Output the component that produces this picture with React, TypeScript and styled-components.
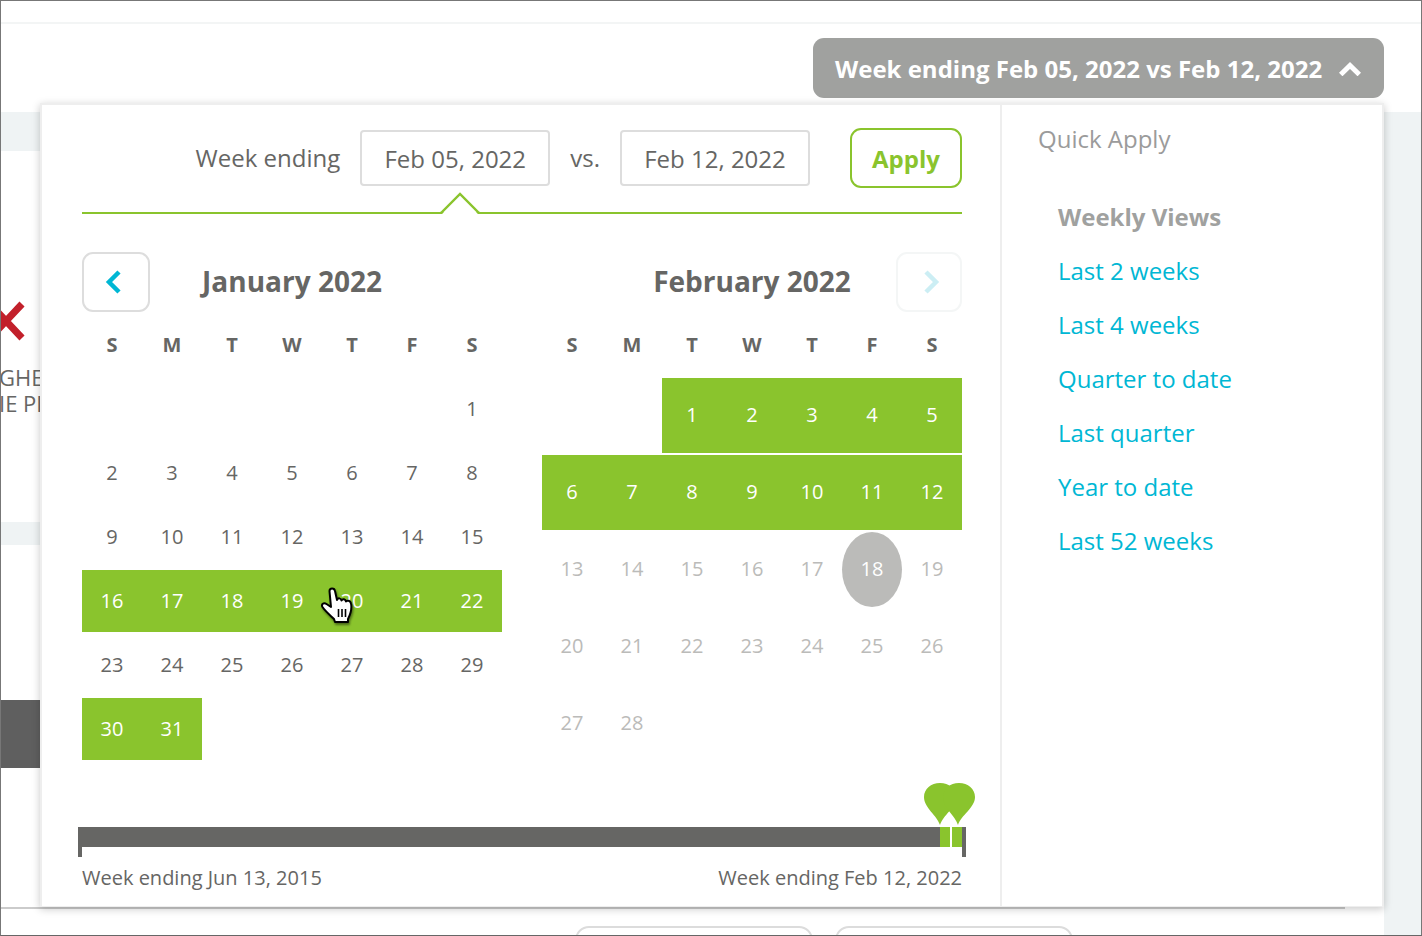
import React from "react";
import styled, { createGlobalStyle } from "styled-components";

const GREEN = "#8ac42d";
const TEXT = "#666664";
const CYAN = "#00b7d4";

const GlobalStyle = createGlobalStyle`
  html, body {
    margin: 0;
    padding: 0;
    background: #fff;
  }
  body {
    font-family: "Open Sans", "Liberation Sans", sans-serif;
    color: ${TEXT};
  }
`;

const Frame = styled.div`
  position: relative;
  width: 1422px;
  height: 936px;
  box-sizing: border-box;
  border: 1px solid #777;
  border-bottom-color: #666;
  overflow: hidden;
  background: #fff;
`;

const TopStrip = styled.div`
  height: 21px;
  border-bottom: 2px solid #f3f5f5;
`;

const PageHeader = styled.header`
  display: flex;
  justify-content: flex-end;
  padding: 14px 37px 14px 0;
`;

const RangeButton = styled.button`
  display: flex;
  align-items: center;
  gap: 17px;
  width: 571px;
  height: 60px;
  box-sizing: border-box;
  padding: 0 22px;
  border: 0;
  border-radius: 11px;
  background: #a0a19f;
  color: #fff;
  font-family: inherit;
  font-size: 24px;
  font-weight: 700;
  white-space: nowrap;
`;

const RangeChevron = styled.svg`
  flex: none;
  width: 22px;
  height: 14px;
  margin-top: 2px;
`;

const PageBody = styled.div`
  display: flex;
  height: 823px;
`;

const Main = styled.main`
  flex: 1;
  min-width: 0;
  display: flex;
  flex-direction: column;
`;

const Gutter = styled.div`
  width: 37px;
  background: #eff3f4;
`;

const Band = styled.div<{ $height: number }>`
  height: ${(p) => p.$height}px;
  flex: none;
  background: #eff3f4;
`;

const DarkBand = styled.div`
  height: 68px;
  flex: none;
  background: #5f5f5f;
`;

const Blank = styled.div<{ $height: number }>`
  height: ${(p) => p.$height}px;
  flex: none;
`;

const RuleLine = styled.div`
  height: 2px;
  flex: none;
  width: 1344px;
  background: #cbcbcb;
`;

const HiddenCard = styled.section`
  height: 371px;
  flex: none;
  box-sizing: border-box;
  padding-top: 150px;
  margin-left: -2px;
  font-size: 22px;
  line-height: 26px;
  white-space: nowrap;
`;

const CrossMark = styled.svg`
  display: block;
  width: 40px;
  height: 40px;
  margin: 0 0 23px -13px;
`;

const FooterPills = styled.div`
  display: flex;
  gap: 22px;
  padding: 17px 0 0 574px;
`;

const Pill = styled.div`
  width: 238px;
  height: 40px;
  box-sizing: border-box;
  border: 2px solid #dcdcdc;
  border-radius: 14px;
`;

const Popup = styled.div`
  position: absolute;
  left: 39px;
  top: 102px;
  width: 1344px;
  height: 804px;
  box-sizing: border-box;
  display: flex;
  border: 2px solid #eeeeee;
  border-bottom-width: 1px;
  background: #fff;
  box-shadow: 0 2px 8px rgba(0, 0, 0, 0.22);
`;

const PickerPane = styled.div`
  width: 960px;
  flex: none;
  box-sizing: border-box;
  padding: 23px 38px 0 40px;
  border-right: 2px solid #eeeeee;
`;

const DateRow = styled.div`
  position: relative;
  display: flex;
  align-items: center;
  justify-content: flex-end;
  padding-bottom: 24px;
  border-bottom: 2px solid ${GREEN};
  font-size: 24px;
`;

const DateLabel = styled.span<{ $gap: number }>`
  margin-right: ${(p) => p.$gap}px;
  margin-bottom: 2px;
`;

const DateBox = styled.div<{ $gap: number }>`
  width: 190px;
  height: 56px;
  box-sizing: border-box;
  margin-right: ${(p) => p.$gap}px;
  display: flex;
  align-items: center;
  justify-content: center;
  border: 2px solid #dddddd;
  border-radius: 4px;
`;

const ApplyButton = styled.button`
  width: 112px;
  height: 60px;
  box-sizing: border-box;
  border: 2px solid ${GREEN};
  border-radius: 11px;
  background: #fff;
  color: ${GREEN};
  font-family: inherit;
  font-size: 24px;
  font-weight: 700;
`;

const Notch = styled.svg`
  position: absolute;
  left: 357px;
  bottom: -2px;
  width: 42px;
  height: 22px;
`;

const Months = styled.div`
  display: flex;
  gap: 40px;
  margin-top: 38px;
`;

const Month = styled.section`
  width: 420px;
`;

const MonthHead = styled.div`
  display: grid;
  grid-template-columns: 68px 1fr 68px;
  align-items: center;
  height: 60px;
`;

const MonthTitle = styled.h2`
  grid-column: 2;
  margin: 0 0 2px;
  text-align: center;
  font-size: 28px;
  font-weight: 700;
  color: ${TEXT};
`;

const NavButton = styled.button<{ $side: "left" | "right" }>`
  grid-column: ${(p) => (p.$side === "left" ? 1 : 3)};
  justify-self: ${(p) => (p.$side === "left" ? "start" : "end")};
  width: ${(p) => (p.$side === "left" ? 68 : 66)}px;
  height: 60px;
  box-sizing: border-box;
  padding: 0;
  display: flex;
  align-items: center;
  justify-content: center;
  border: 2px solid ${(p) => (p.$side === "left" ? "#dddddd" : "#f4f6f6")};
  border-radius: 11px;
  background: #fff;
`;

const Weekdays = styled.div`
  display: grid;
  grid-template-columns: repeat(7, 60px);
  height: 66px;
  box-sizing: border-box;
  padding-bottom: 2px;
  align-items: center;
  text-align: center;
  font-size: 20px;
  font-weight: 700;
`;

const DayGrid = styled.div<{ $rowHeight: number }>`
  display: grid;
  grid-template-columns: repeat(7, 60px);
  grid-auto-rows: ${(p) => p.$rowHeight}px;
  row-gap: 2px;
`;

type DayTone = "plain" | "selected" | "muted" | "today";

const toneColor: Record<DayTone, string> = {
  plain: TEXT,
  selected: "#fff",
  muted: "#bbbbb9",
  today: "#fff",
};

const toneFill: Record<DayTone, string> = {
  plain: "transparent",
  selected: GREEN,
  muted: "transparent",
  today: "#bbbbb9",
};

const Day = styled.div<{ $tone: DayTone; $start?: number }>`
  grid-column-start: ${(p) => p.$start ?? "auto"};
  box-sizing: border-box;
  padding-bottom: 2px;
  display: flex;
  align-items: center;
  justify-content: center;
  font-size: 20px;
  color: ${(p) => toneColor[p.$tone]};
  background: ${(p) => toneFill[p.$tone]};
  border-radius: ${(p) => (p.$tone === "today" ? "50%" : "0")};
`;

const Timeline = styled.div`
  position: relative;
  margin: 66px -4px 0;
`;

const Track = styled.div`
  display: flex;
  align-items: flex-start;
  height: 30px;
`;

const Tick = styled.div`
  width: 4px;
  height: 30px;
  flex: none;
  background: #666664;
`;

const TrackFill = styled.div`
  flex: 1;
  height: 20px;
  background: #666664;
`;

const TrackPick = styled.div<{ $gap?: boolean }>`
  width: 10px;
  height: 20px;
  flex: none;
  margin-left: ${(p) => (p.$gap ? 2 : 0)}px;
  background: ${GREEN};
`;

const Pins = styled.svg`
  position: absolute;
  left: 846px;
  top: -44px;
  width: 51px;
  height: 42px;
`;

const TimelineLabels = styled.div`
  display: flex;
  justify-content: space-between;
  margin-top: 6px;
  padding: 0 4px;
  font-size: 20px;
  line-height: 30px;
`;

const QuickPane = styled.aside`
  flex: 1;
  padding: 17px 0 0 36px;
`;

const QuickTitle = styled.div`
  font-size: 24px;
  line-height: 34px;
  color: #9b9b9b;
  margin-bottom: 34px;
`;

const QuickList = styled.div`
  padding-left: 20px;
`;

const QuickHeading = styled.div`
  font-size: 24px;
  font-weight: 700;
  line-height: 54px;
  color: #a0a19f;
`;

const QuickLink = styled.a`
  display: block;
  font-size: 24px;
  line-height: 54px;
  color: ${CYAN};
  text-decoration: none;
`;

const Cursor = styled.svg`
  position: absolute;
  left: 318px;
  top: 584px;
  width: 36px;
  height: 40px;
  filter: drop-shadow(1px 2px 1px rgba(0, 0, 0, 0.45));
`;

const WEEKDAYS = ["S", "M", "T", "W", "T", "F", "S"];
const QUICK_LINKS = [
  "Last 2 weeks",
  "Last 4 weeks",
  "Quarter to date",
  "Last quarter",
  "Year to date",
  "Last 52 weeks",
];

const range = (from: number, to: number) =>
  Array.from({ length: to - from + 1 }, (_, i) => from + i);

const Chevron = ({ points, color, width }: { points: string; color: string; width: number }) => (
  <svg width="24" height="28" viewBox="0 0 24 28" fill="none">
    <polyline points={points} stroke={color} strokeWidth={width} strokeLinecap="butt" strokeLinejoin="miter" />
  </svg>
);

const MonthDays = ({
  days,
  firstColumn,
  rowHeight,
  toneOf,
}: {
  days: number;
  firstColumn: number;
  rowHeight: number;
  toneOf: (day: number) => DayTone;
}) => (
  <DayGrid $rowHeight={rowHeight}>
    {range(1, days).map((day) => (
      <Day key={day} $tone={toneOf(day)} $start={day === 1 ? firstColumn : undefined}>
        {day}
      </Day>
    ))}
  </DayGrid>
);

const WeekdayRow = () => (
  <Weekdays>
    {WEEKDAYS.map((d, i) => (
      <span key={i}>{d}</span>
    ))}
  </Weekdays>
);

const januaryTone = (day: number): DayTone =>
  (day >= 16 && day <= 22) || day >= 30 ? "selected" : "plain";

const februaryTone = (day: number): DayTone => {
  if (day <= 12) return "selected";
  return day === 18 ? "today" : "muted";
};

const App: React.FC = () => (
  <Frame>
    <GlobalStyle />
    <TopStrip />
    <PageHeader>
      <RangeButton>
        Week ending Feb 05, 2022 vs Feb 12, 2022
        <RangeChevron viewBox="0 0 22 14" fill="none">
          <polyline points="1.7,12.5 11,3.5 20.3,12.5" stroke="#fff" strokeWidth="5" />
        </RangeChevron>
      </RangeButton>
    </PageHeader>

    <PageBody>
      <Main>
        <Band $height={39} />
        <HiddenCard>
          <CrossMark viewBox="0 0 40 40">
            <path d="M4 3 L36 37 M36 3 L4 37" stroke="#c2202b" strokeWidth="7" fill="none" />
          </CrossMark>
          GHE
          <br />
          IE PI
        </HiddenCard>
        <Band $height={23} />
        <Blank $height={155} />
        <DarkBand />
        <Blank $height={139} />
        <RuleLine />
        <FooterPills>
          <Pill />
          <Pill />
        </FooterPills>
      </Main>
      <Gutter />
    </PageBody>

    <Popup>
      <PickerPane>
        <DateRow>
          <DateLabel $gap={20}>Week ending</DateLabel>
          <DateBox $gap={20}>Feb 05, 2022</DateBox>
          <DateLabel $gap={20}>vs.</DateLabel>
          <DateBox $gap={40}>Feb 12, 2022</DateBox>
          <ApplyButton>Apply</ApplyButton>
          <Notch viewBox="0 0 42 22" fill="none">
            <polygon points="3,22 21,3 39,22" fill="#fff" />
            <polyline points="1,21 2,21 21,2 40,21 41,21" stroke={GREEN} strokeWidth="2.4" />
          </Notch>
        </DateRow>

        <Months>
          <Month>
            <MonthHead>
              <NavButton $side="left">
                <Chevron points="15,4 5,14 15,24" color={CYAN} width={4.5} />
              </NavButton>
              <MonthTitle>January 2022</MonthTitle>
            </MonthHead>
            <WeekdayRow />
            <MonthDays days={31} firstColumn={7} rowHeight={62} toneOf={januaryTone} />
          </Month>
          <Month>
            <MonthHead>
              <MonthTitle>February 2022</MonthTitle>
              <NavButton $side="right">
                <Chevron points="9,4 19,14 9,24" color="#cceef4" width={4.5} />
              </NavButton>
            </MonthHead>
            <WeekdayRow />
            <MonthDays days={28} firstColumn={3} rowHeight={75} toneOf={februaryTone} />
          </Month>
        </Months>

        <Timeline>
          <Pins viewBox="0 0 51 42">
            <path d="M16 42 C13 32 0 25 0 14 C0 6 7 0 16 0 C25 0 32 6 32 14 C32 25 19 32 16 42Z" fill={GREEN} />
            <path d="M34 42 C31 32 19 25 19 14 C19 6 26 0 35 0 C44 0 51 6 51 14 C51 25 37 32 34 42Z" fill={GREEN} />
          </Pins>
          <Track>
            <Tick />
            <TrackFill />
            <TrackPick />
            <TrackPick $gap />
            <Tick />
          </Track>
          <TimelineLabels>
            <span>Week ending Jun 13, 2015</span>
            <span>Week ending Feb 12, 2022</span>
          </TimelineLabels>
        </Timeline>
      </PickerPane>

      <QuickPane>
        <QuickTitle>Quick Apply</QuickTitle>
        <QuickList>
          <QuickHeading>Weekly Views</QuickHeading>
          {QUICK_LINKS.map((label) => (
            <QuickLink key={label} href="#">
              {label}
            </QuickLink>
          ))}
        </QuickList>
      </QuickPane>
    </Popup>

    <Cursor viewBox="0 0 36 40">
      <path
        d="M10.5 6 C10.5 2.5 15.5 2.5 16 6 L18 15 C19 12.5 22 13 22.5 15.5 C23.5 13.5 26.5 14 27 16.5 C28 15 31.5 15.5 32 18.5 C33 23 31.5 29 29 34 L29 37 L16 37 L15 34 C12 31 7 27 3.5 22 C2 19.5 4.5 17 7.5 19 L12 22 Z"
        fill="#fff"
        stroke="#000"
        strokeWidth="2"
        strokeLinejoin="round"
      />
      <path d="M19.5 24 V32 M23 24 V32 M26.5 24 V32" stroke="#000" strokeWidth="1.6" />
    </Cursor>
  </Frame>
);

export default App;
